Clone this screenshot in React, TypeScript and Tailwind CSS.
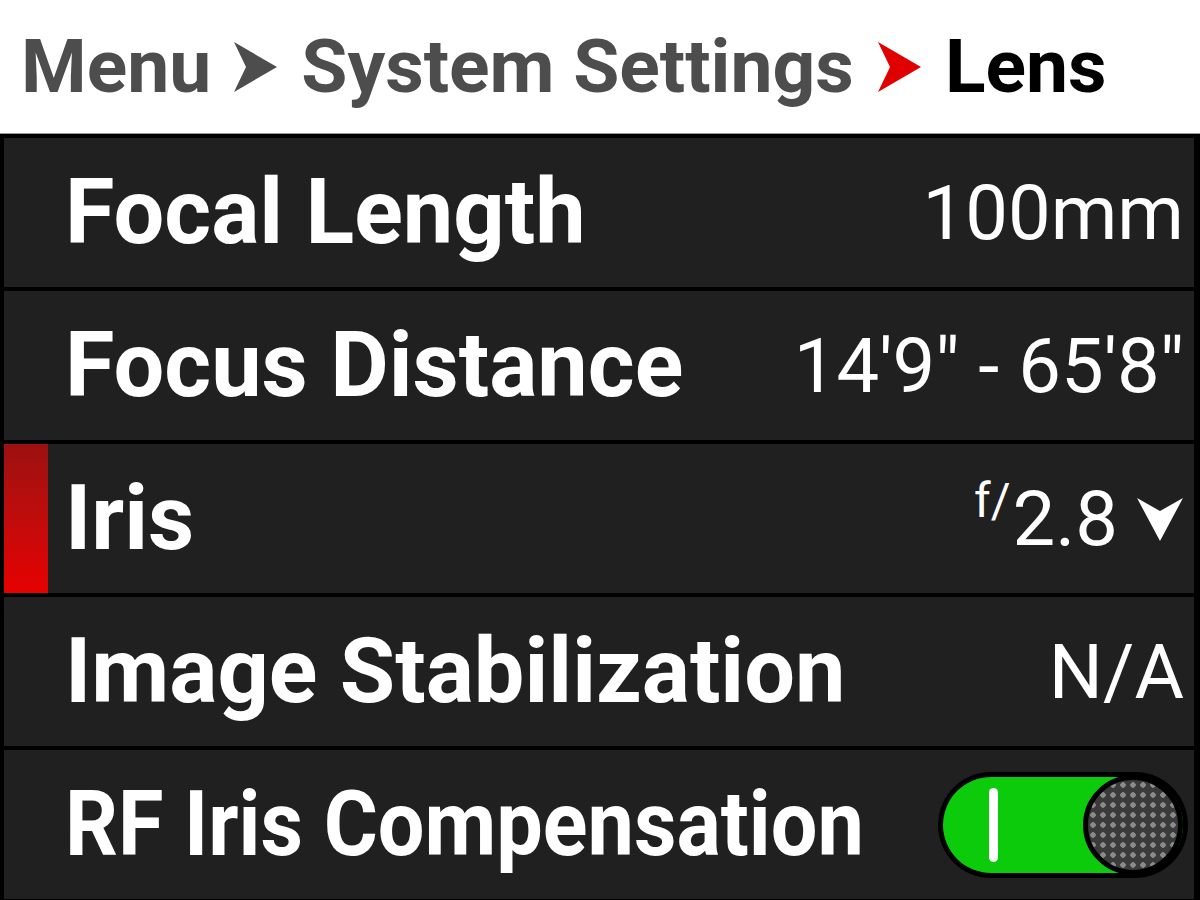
const rows = [
  { label: "Focal Length", value: "100mm" },
  { label: "Focus Distance", value: `14'9" - 65'8"` },
  { label: "Iris", value: "iris" },
  { label: "Image Stabilization", value: "N/A" },
  { label: "RF Iris Compensation", value: "toggle" },
];

function Crumb({ color }: { color: string }) {
  return (
    <svg width="45" height="52" viewBox="0 0 45 52" className="shrink-0">
      <path d="M2 1 L45 26 L2 51 L14 26 Z" fill={color} />
    </svg>
  );
}

function Toggle() {
  return (
    <div className="mr-[6px] flex h-[106px] w-[250px] items-center rounded-full bg-black p-[5px]">
      <div className="relative flex h-full w-full items-center rounded-full bg-[#0bcb0b]">
        <div className="ml-[46px] h-[74px] w-[9px] rounded-full bg-white" />
        <div
          className="absolute right-0 top-1/2 h-[100px] w-[100px] -translate-y-1/2 rounded-full border-[5px] border-black bg-[#3a3a3a]"
          style={{
            backgroundImage:
              "radial-gradient(circle, #8a8a8a 2.5px, transparent 3px)",
            backgroundSize: "10px 10px",
          }}
        />
      </div>
    </div>
  );
}

function IrisValue() {
  return (
    <div className="mr-[10px] flex items-center text-white">
      <span className="mr-[2px] -mt-[36px] text-[48px] leading-none">f/</span>
      <span className="text-[76px] leading-none">2.8</span>
      <svg width="48" height="45" viewBox="0 0 48 45" className="ml-[18px] mt-[2px]">
        <path d="M1 1 L24 44 L47 1 L24 14 Z" fill="white" />
      </svg>
    </div>
  );
}

export default function App() {
  return (
    <div className="flex h-[900px] w-[1200px] flex-col overflow-hidden bg-black font-['Roboto',sans-serif]">
      {/* breadcrumb */}
      <div className="flex h-[134px] items-center border-b border-[#999] bg-white pl-[21px]">
        <span className="text-[75px] font-bold text-[#4d4d4d]">Menu</span>
        <div className="ml-[21px] mr-[24px]">
          <Crumb color="#4d4d4d" />
        </div>
        <span className="text-[75px] font-bold text-[#4d4d4d]">System Settings</span>
        <div className="ml-[22px] mr-[24px]">
          <Crumb color="#e00000" />
        </div>
        <span className="text-[75px] font-bold text-black">Lens</span>
      </div>

      <div className="flex flex-1 flex-col gap-1 pl-1 pr-[6px] pt-1">
        {rows.map((row) => (
          <div key={row.label} className="flex h-[149px] items-center bg-[#202020]">
            <div
              className={
                row.value === "iris"
                  ? "h-full w-[44px] shrink-0 bg-gradient-to-b from-[#9c1010] to-[#e60000]"
                  : "h-full w-[44px] shrink-0"
              }
            />
            <span
              className={
                row.value === "toggle"
                  ? "ml-[17px] origin-left scale-x-[0.92] whitespace-nowrap text-[90px] font-bold leading-none text-white"
                  : "ml-[17px] whitespace-nowrap text-[90px] font-bold leading-none text-white"
              }
            >
              {row.label}
            </span>
            <div className="ml-auto flex items-center">
              {row.value === "iris" ? (
                <IrisValue />
              ) : row.value === "toggle" ? (
                <Toggle />
              ) : (
                <span className="mr-[10px] text-[76px] leading-none text-white">{row.value}</span>
              )}
            </div>
          </div>
        ))}
      </div>
    </div>
  );
}
